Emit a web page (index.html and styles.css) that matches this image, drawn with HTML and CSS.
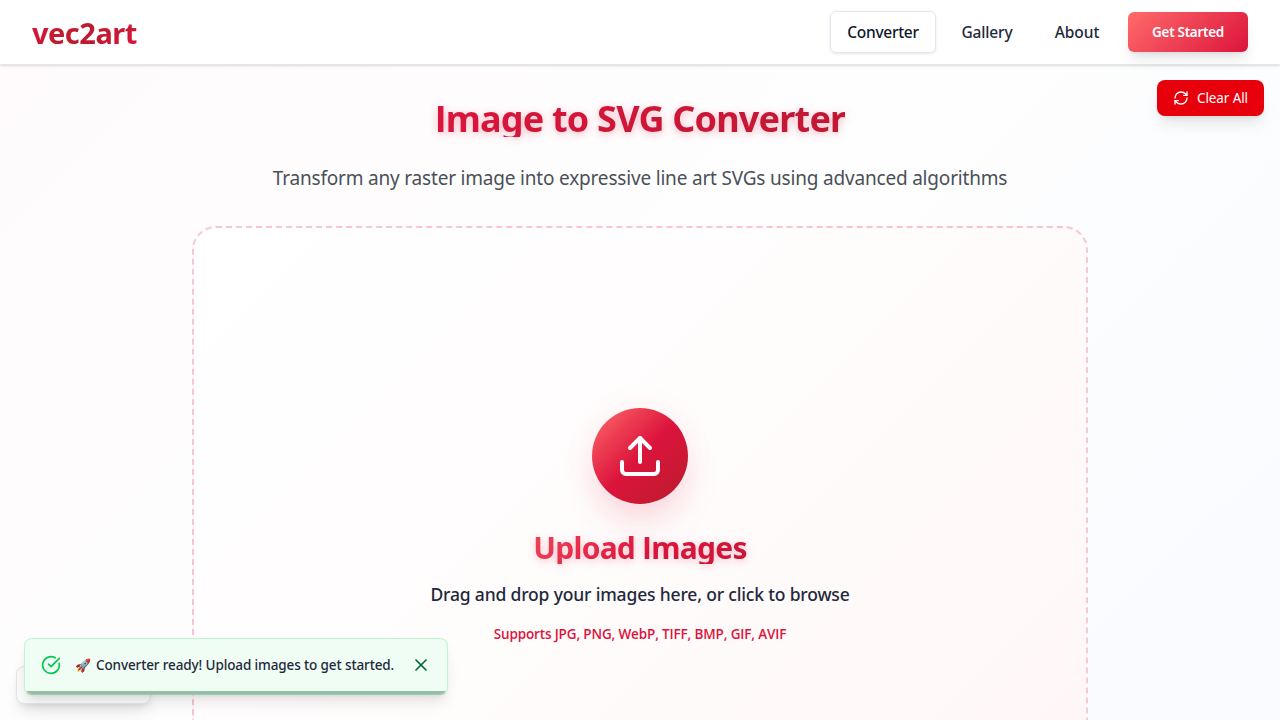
FILE: index.html
```html
<!DOCTYPE html>
<html lang="en">
<head>
<meta charset="utf-8">
<title>vec2art</title>
<link rel="stylesheet" href="styles.css">
</head>
<body>
<header class="header">
  <a class="logo">vec2art</a>
  <nav class="nav">
    <a class="nav-link active">Converter</a>
    <a class="nav-link gallery">Gallery</a>
    <a class="nav-link about">About</a>
    <button class="cta">Get Started</button>
  </nav>
</header>
<button class="clear">
  <svg width="16" height="16" viewBox="0 0 24 24" fill="none" stroke="currentColor" stroke-width="2" stroke-linecap="round" stroke-linejoin="round"><path d="M3 12a9 9 0 0 1 9-9 9.75 9.75 0 0 1 6.74 2.74L21 8"/><path d="M21 3v5h-5"/><path d="M21 12a9 9 0 0 1-9 9 9.75 9.75 0 0 1-6.74-2.74L3 16"/><path d="M8 16H3v5"/></svg>
  <span>Clear All</span>
</button>
<main class="main">
  <h1 class="title"><span class="plain">I</span>mage to SVG Converter</h1>
  <p class="subtitle">Transform any raster image into expressive line art SVGs using advanced algorithms</p>
  <section class="dropzone">
    <div class="upload-icon">
      <svg width="48" height="48" viewBox="0 0 24 24" fill="none" stroke="currentColor" stroke-width="2" stroke-linecap="round" stroke-linejoin="round"><path d="M12 3v12"/><path d="m17 8-5-5-5 5"/><path d="M21 15v4a2 2 0 0 1-2 2H5a2 2 0 0 1-2-2v-4"/></svg>
    </div>
    <h2 class="upload-title">Upload <span class="plain">I</span>mages</h2>
    <p class="hint">Drag and drop your images here, or click to browse</p>
    <p class="formats">Supports JPG, PNG, WebP, TIFF, BMP, GIF, AVIF</p>
  </section>
</main>
<div class="corner-panel"></div>
<div class="toast">
  <svg class="check" width="20" height="20" viewBox="0 0 24 24" fill="none" stroke="currentColor" stroke-width="2" stroke-linecap="round" stroke-linejoin="round"><path d="M21.801 10A10 10 0 1 1 17 3.335"/><path d="m9 11 3 3L22 4"/></svg>
  <span class="rocket">🚀</span>
  <span class="message">Converter ready! Upload images to get started.</span>
  <svg class="close" width="20" height="20" viewBox="0 0 24 24" fill="none" stroke="currentColor" stroke-width="2" stroke-linecap="round" stroke-linejoin="round"><path d="M18 6 6 18"/><path d="m6 6 12 12"/></svg>
  <div class="progress"></div>
</div>
</body>
</html>
```
FILE: styles.css
```css
* { box-sizing: border-box; margin: 0; padding: 0; }
body {
  height: 720px;
  overflow: hidden;
  font-family: "Noto Sans", "Open Sans", sans-serif;
  color: #1e293b;
  background: linear-gradient(135deg, #fffbfc 0%, #fefefe 50%, #f9fbff 100%);
}
button { border: 0; font-family: inherit; }
a, p, h1, h2, button, span { white-space: nowrap; }
.header {
  position: relative;
  display: flex;
  align-items: center;
  justify-content: space-between;
  height: 65px;
  padding: 0 32px;
  background: #fff;
  border-bottom: 1px solid #e2e8f0;
  box-shadow: 0 1px 3px rgba(0, 0, 0, .1), 0 1px 2px -1px rgba(0, 0, 0, .1);
}
.logo {
  font-size: 29px;
  line-height: 36px;
  font-weight: 700;
  padding-top: 2px;
  letter-spacing: -.5px;
  background: linear-gradient(135deg, #dc143c 0%, #b91c2c 50%, #dc143c 100%);
  -webkit-background-clip: text;
  background-clip: text;
  color: transparent;
}
.nav { display: flex; align-items: center; }
.nav-link {
  display: flex;
  align-items: center;
  justify-content: center;
  height: 42px;
  font-size: 15.5px;
  letter-spacing: -.3px;
  font-weight: 550;
}
.active {
  width: 106px;
  color: #0f172a;
  border: 1px solid #e2e8f0;
  border-radius: 6px;
  box-shadow: 0 1px 3px rgba(0, 0, 0, .1);
}
.gallery { width: 52px; margin-left: 25px; letter-spacing: -.15px; }
.about { width: 46px; margin-left: 41px; letter-spacing: -.05px; }
.cta {
  width: 120px;
  height: 40px;
  margin-left: 28px;
  border-radius: 6px;
  color: #fff;
  font-size: 13.5px;
  letter-spacing: -.3px;
  font-weight: 650;
  background: linear-gradient(135deg, #ff6b6b, #dc143c);
  box-shadow: 0 10px 15px -3px rgba(0, 0, 0, .1), 0 4px 6px -4px rgba(0, 0, 0, .1);
}
.clear {
  position: absolute;
  top: 80px;
  right: 16px;
  display: flex;
  align-items: center;
  gap: 8px;
  width: 107px;
  height: 36px;
  padding: 0 16px;
  border-radius: 8px;
  color: #fff;
  background: #e7000b;
  font-size: 13.5px;
  letter-spacing: -.1px;
  box-shadow: 0 10px 15px -3px rgba(0, 0, 0, .1), 0 4px 6px -4px rgba(0, 0, 0, .1);
}
.clear svg { flex: none; }
.main {
  display: flex;
  flex-direction: column;
  align-items: center;
  height: 655px;
  overflow: hidden;
  padding-top: 36px;
}
.main > * { flex: none; }
.plain { font-family: "Open Sans", sans-serif; }
.title {
  height: 36px;
  line-height: 36px;
  font-size: 36px;
  letter-spacing: -.8px;
  font-weight: 700;
  background: linear-gradient(135deg, #dc143c, #c01833);
  -webkit-background-clip: text;
  background-clip: text;
  color: transparent;
  filter: drop-shadow(0 2px 4px rgba(220, 20, 60, .3));
}
.subtitle {
  margin-top: 27px;
  height: 28px;
  line-height: 28px;
  font-size: 19px;
  letter-spacing: -.19px;
  color: #4b5058;
}
.dropzone {
  display: flex;
  flex-direction: column;
  align-items: center;
  width: 896px;
  height: 600px;
  margin-top: 34px;
  padding-top: 180px;
  border: 2px dashed rgba(220, 20, 60, .22);
  border-radius: 24px;
  background: linear-gradient(135deg, #fff 0%, #fffcfc 50%, #fff6f6 100%);
}
.upload-icon {
  display: flex;
  align-items: center;
  justify-content: center;
  width: 96px;
  height: 96px;
  border-radius: 50%;
  color: #fff;
  background: linear-gradient(135deg, #ff6b6b 0%, #dc143c 50%, #b91c2c 100%);
  box-shadow: 0 20px 40px -8px rgba(220, 20, 60, .2), 0 0 40px rgba(220, 20, 60, .04);
}
.upload-title {
  margin-top: 28px;
  height: 32px;
  line-height: 32px;
  font-size: 30px;
  letter-spacing: -.75px;
  font-weight: 700;
  background: linear-gradient(135deg, #f04458 0%, #dc143c 55%, #ca1736 100%);
  -webkit-background-clip: text;
  background-clip: text;
  color: transparent;
  filter: drop-shadow(0 2px 4px rgba(220, 20, 60, .25));
}
.hint {
  margin-top: 16px;
  line-height: 28px;
  font-size: 17.5px;
  letter-spacing: -.17px;
  font-weight: 500;
}
.formats {
  margin-top: 16px;
  line-height: 20px;
  font-family: "Open Sans", sans-serif;
  font-size: 13.5px;
  letter-spacing: -.14px;
  font-weight: 600;
  color: #dc143c;
}
.corner-panel {
  position: absolute;
  left: 16px;
  top: 666px;
  width: 135px;
  height: 38px;
  border: 1px solid #e5e5e8;
  border-radius: 8px;
  background: #fafafa;
  box-shadow: 0 10px 15px -3px rgba(0, 0, 0, .1), 0 4px 6px -4px rgba(0, 0, 0, .1);
}
.toast {
  position: absolute;
  left: 24px;
  top: 638px;
  display: flex;
  align-items: center;
  width: 424px;
  height: 57px;
  padding: 0 16px 3px;
  border: 1px solid #b9f8cf;
  border-bottom-color: #9ccbae;
  border-radius: 8px;
  background: #f0fdf4;
  overflow: hidden;
  box-shadow: 0 10px 15px -3px rgba(0, 0, 0, .1), 0 4px 6px -4px rgba(0, 0, 0, .1);
}
.check { flex: none; color: #00c950; }
.rocket { flex: none; width: 21px; margin-left: 14px; font-size: 13px; line-height: 20px; }
.message {
  flex: none;
  width: 300px;
  font-size: 13.5px;
  letter-spacing: -.12px;
  font-weight: 550;
  line-height: 20px;
}
.close { flex: none; margin-left: 15px; color: #016630; }
.progress {
  position: absolute;
  left: 0;
  right: 0;
  bottom: 0;
  height: 3px;
  background: #94bfa5;
}
```
